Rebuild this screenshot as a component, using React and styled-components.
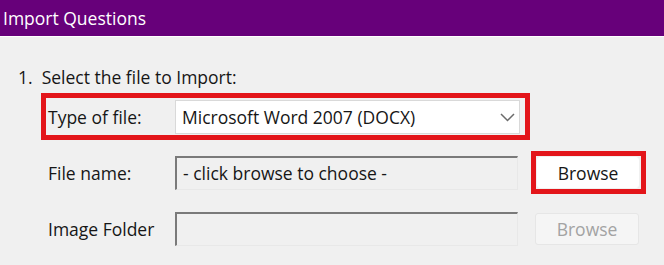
import React from "react";
import styled, { createGlobalStyle } from "styled-components";

const GlobalStyle = createGlobalStyle`
    html, body {
        margin: 0;
        padding: 0;
        background: #f0f0f0;
    }
    body {
        font-family: "Open Sans", "Noto Sans", sans-serif;
        color: #161616;
    }
`;

function Chevron() {
    return (
        <svg width="15" height="9" viewBox="0 0 15 9">
            <path d="M1 1 L7.5 7.5 L14 1" fill="none" stroke="#6b6b6b" strokeWidth="1.5" />
        </svg>
    );
}

export default function App() {
    return (
        <Dialog>
            <GlobalStyle />
            <TitleBar>Import Questions</TitleBar>
            <Body>
                <StepHeading>1.&nbsp; Select the file to Import:</StepHeading>
                <Highlight>
                    <Label>Type of file:</Label>
                    <Select>
                        <span>Microsoft Word 2007 (DOCX)</span>
                        <Chevron />
                    </Select>
                </Highlight>
                <Row $top={11}>
                    <Label>File name:</Label>
                    <Field>- click browse to choose -</Field>
                    <ButtonHighlight>
                        <Button>Browse</Button>
                    </ButtonHighlight>
                </Row>
                <Row $top={18}>
                    <Label>Image Folder</Label>
                    <Field />
                    <Button disabled $muted>Browse</Button>
                </Row>
            </Body>
        </Dialog>
    );
}

const Dialog = styled.div`
    width: 664px;
    height: 265px;
    overflow: hidden;
    background: #f0f0f0;
`;

const TitleBar = styled.div`
    height: 37px;
    box-sizing: border-box;
    background: #67007a;
    border-bottom: 1px solid #ffffff;
    color: #ffffff;
    font-size: 17.5px;
    display: flex;
    align-items: center;
    padding-left: 3px;
`;

const Body = styled.div`
    padding: 30px 0 0 18px;
`;

const StepHeading = styled.div`
    font-size: 17.5px;
    line-height: 21px;
`;

const Highlight = styled.div`
    display: flex;
    align-items: center;
    margin: 5px 0 0 23px;
    width: 489px;
    height: 47px;
    box-sizing: border-box;
    border: 5px solid #e3151a;
    padding: 2px 5px 1px 2px;
`;

const Label = styled.div`
    width: 127px;
    flex: none;
    font-size: 17.5px;
`;

const Select = styled.div`
    flex: 1;
    height: 34px;
    box-sizing: border-box;
    background: #ffffff;
    border: 1px solid #d9d9d9;
    display: flex;
    align-items: center;
    justify-content: space-between;
    padding: 0 4px 0 6px;
    font-size: 17.5px;
`;

const Row = styled.div`
    display: flex;
    align-items: center;
    margin-top: ${p => p.$top}px;
    padding-left: 30px;
`;

const Field = styled.div`
    width: 343px;
    height: 34px;
    box-sizing: border-box;
    border-style: solid;
    border-width: 2px 1px 1px 2px;
    border-color: #7a7a7a #e8e8e8 #e8e8e8 #7a7a7a;
    background: #f0f0f0;
    display: flex;
    align-items: center;
    padding-left: 6px;
    font-size: 17.5px;
`;

const ButtonHighlight = styled.div`
    margin-left: 13px;
    border: 5px solid #e3151a;
    padding: 1px 2px 1px 1px;
`;

const Button = styled.button`
    font-family: inherit;
    font-size: 17.5px;
    width: ${p => (p.$muted ? "104px" : "102px")};
    height: ${p => (p.$muted ? "32px" : "31px")};
    margin-left: ${p => (p.$muted ? "17px" : "0")};
    background: ${p => (p.$muted ? "#f5f5f5" : "#ffffff")};
    color: ${p => (p.$muted ? "#a3a3a3" : "#161616")};
    border: 1px solid ${p => (p.$muted ? "#e6e6e6" : "#ffffff")};
    border-radius: 3px;
    padding: 0;
`;
